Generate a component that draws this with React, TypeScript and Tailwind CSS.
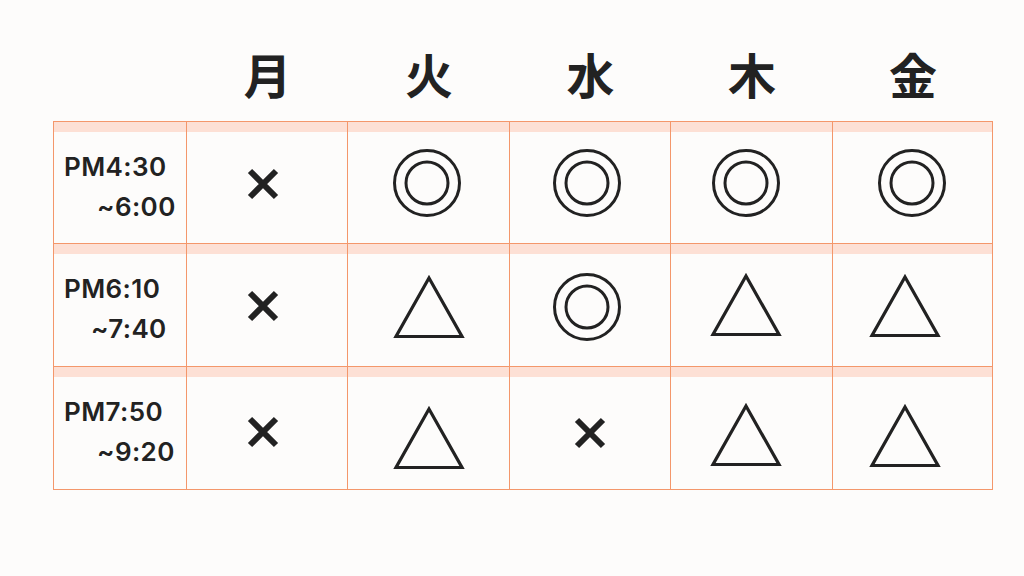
import React from "react";

type Sym = "x" | "o" | "t";

const Cross = () => (
  <svg width="34" height="34" viewBox="0 0 34 34">
    <path d="M4 4 L30 30 M30 4 L4 30" stroke="#222222" strokeWidth="6" fill="none" />
  </svg>
);

const DoubleCircle = () => (
  <svg width="70" height="70" viewBox="0 0 70 70">
    <circle cx="35" cy="35" r="32.5" stroke="#222222" strokeWidth="3" fill="none" />
    <circle cx="35" cy="35" r="21" stroke="#222222" strokeWidth="3" fill="none" />
  </svg>
);

const Triangle = () => (
  <svg width="72" height="64" viewBox="0 0 72 64">
    <path d="M36 3 L69 61.5 L3 61.5 Z" stroke="#222222" strokeWidth="3.2" fill="none" strokeLinejoin="miter" />
  </svg>
);

const symbolOf = (s: Sym) => (s === "x" ? <Cross /> : s === "o" ? <DoubleCircle /> : <Triangle />);

const cols = "grid grid-cols-[133px_161px_162px_161px_162px_160px]";

const days = ["月", "火", "水", "木", "金"];

const rows: { a: string; b: string; bpl: string; s: Sym[]; h: string; pad: string[] }[] = [
  {
    a: "PM4:30",
    b: "~6:00",
    bpl: "pl-[33px]",
    s: ["x", "o", "o", "o", "o"],
    h: "h-[122px]",
    pad: ["pb-[8px] pr-[8px]", "pb-[10px] pr-[4px]", "pb-[10px] pr-[6px]", "pb-[10px] pr-[12px]", "pb-[10px] pr-[2px]"],
  },
  {
    a: "PM6:10",
    b: "~7:40",
    bpl: "pl-[27px]",
    s: ["x", "t", "o", "t", "t"],
    h: "h-[123px]",
    pad: ["pb-[8px] pr-[8px]", "pb-[6px]", "pb-[6px] pr-[6px]", "pb-[10px] pr-[12px]", "pb-[8px] pr-[16px]"],
  },
  {
    a: "PM7:50",
    b: "~9:20",
    bpl: "pl-[33px]",
    s: ["x", "t", "x", "t", "t"],
    h: "h-[123px]",
    pad: ["pb-[2px] pr-[8px]", "pt-[10px]", "pb-[0px]", "pt-[4px] pr-[12px]", "pt-[6px] pr-[16px]"],
  },
];

export default function App() {
  return (
    <div className="w-[1024px] h-[576px] bg-[#fdfcfb] overflow-hidden" style={{ fontFamily: "Inter, 'Noto Sans', sans-serif" }}>
      <div className={`${cols} ml-[54px] h-[121px] pt-[45px]`}>
        <div />
        {days.map((d) => (
          <div
            key={d}
            className="flex justify-center text-[48px] leading-[56px] font-bold text-[#222222]"
            style={{ fontFamily: "'Noto Sans CJK JP', sans-serif" }}
          >
            {d}
          </div>
        ))}
      </div>
      <div className="ml-[53px] w-[940px] border-l border-t border-[#f4976b]">
        {rows.map((r) => (
          <div key={r.a} className={`${cols} ${r.h}`}>
            <div className="flex flex-col border-r border-b border-[#f4976b]">
              <div className="h-[10px] bg-[#fde0d5]" />
              <div className="flex-1 flex flex-col justify-center pl-[10px] pb-[2px] text-[26px] font-semibold text-[#222222] leading-[40px] tracking-[0.4px]">
                <div>{r.a}</div>
                <div className={r.bpl}>{r.b}</div>
              </div>
            </div>
            {r.s.map((s, i) => (
              <div key={i} className="flex flex-col border-r border-b border-[#f4976b]">
                <div className="h-[10px] bg-[#fde0d5]" />
                <div className={`flex-1 flex items-center justify-center ${r.pad[i]}`}>{symbolOf(s)}</div>
              </div>
            ))}
          </div>
        ))}
      </div>
    </div>
  );
}
